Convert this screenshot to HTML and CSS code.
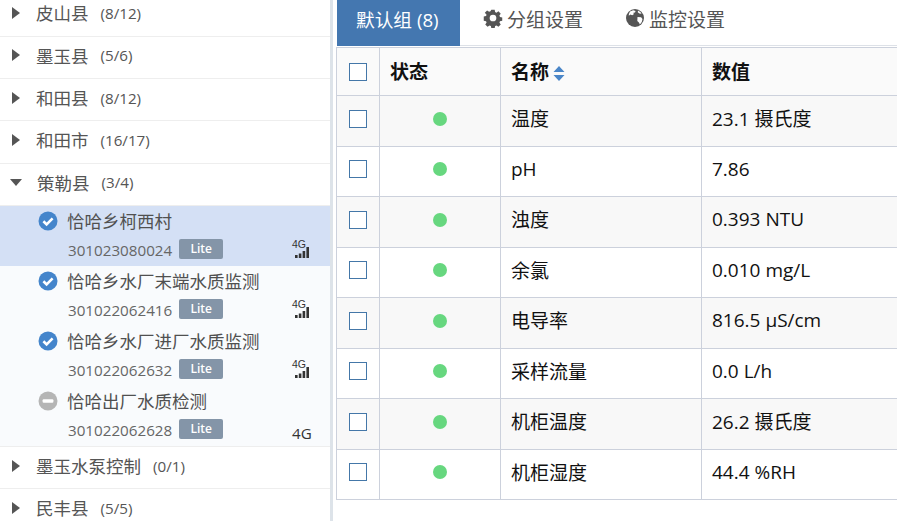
FILE: index.html
```html
<!DOCTYPE html>
<html lang="zh-CN">
<head>
<meta charset="utf-8">
<title>监控</title>
<link rel="stylesheet" href="styles.css">
</head>
<body>
<svg class="defs" width="0" height="0" aria-hidden="true">
  <symbol id="ok" viewBox="0 0 20 20"><circle cx="10" cy="10" r="9.5" fill="currentColor"/><path d="M5.4 10.3l3.2 3.1 6-6" fill="none" stroke="#fff" stroke-width="2.6"/></symbol>
  <symbol id="stop" viewBox="0 0 20 20"><circle cx="10" cy="10" r="9.5" fill="currentColor"/><rect x="4.6" y="8.2" width="10.8" height="3.6" rx="1" fill="#fff"/></symbol>
  <symbol id="sig" viewBox="0 0 14 11"><rect x="0" y="8" width="2.6" height="3"/><rect x="3.8" y="6.5" width="2.6" height="4.5"/><rect x="7.6" y="4" width="2.6" height="7"/><rect x="11.4" y="0" width="2.6" height="11"/></symbol>
</svg>
<div class="app">
  <aside class="side">
    <div class="group"><i class="tri"></i><span class="gname">皮山县</span><span class="count">(8/12)</span></div>
    <div class="group"><i class="tri"></i><span class="gname">墨玉县</span><span class="count">(5/6)</span></div>
    <div class="group"><i class="tri"></i><span class="gname">和田县</span><span class="count">(8/12)</span></div>
    <div class="group"><i class="tri"></i><span class="gname">和田市</span><span class="count">(16/17)</span></div>
    <div class="group open"><i class="tri down"></i><span class="gname">策勒县</span><span class="count">(3/4)</span></div>
    <div class="items">
      <div class="item active">
        <svg class="st ok"><use href="#ok"/></svg>
        <div class="body"><div class="iname">恰哈乡柯西村</div><div class="meta"><span class="sn">301023080024</span><span class="lite">Lite</span></div></div>
        <div class="net"><span class="g">4G</span><svg class="sig"><use href="#sig"/></svg></div>
      </div>
      <div class="item">
        <svg class="st ok"><use href="#ok"/></svg>
        <div class="body"><div class="iname">恰哈乡水厂末端水质监测</div><div class="meta"><span class="sn">301022062416</span><span class="lite">Lite</span></div></div>
        <div class="net"><span class="g">4G</span><svg class="sig"><use href="#sig"/></svg></div>
      </div>
      <div class="item">
        <svg class="st ok"><use href="#ok"/></svg>
        <div class="body"><div class="iname">恰哈乡水厂进厂水质监测</div><div class="meta"><span class="sn">301022062632</span><span class="lite">Lite</span></div></div>
        <div class="net"><span class="g">4G</span><svg class="sig"><use href="#sig"/></svg></div>
      </div>
      <div class="item">
        <svg class="st off"><use href="#stop"/></svg>
        <div class="body"><div class="iname">恰哈出厂水质检测</div><div class="meta"><span class="sn">301022062628</span><span class="lite">Lite</span></div></div>
        <div class="net"><span class="g big">4G</span></div>
      </div>
    </div>
    <div class="group"><i class="tri"></i><span class="gname">墨玉水泵控制</span><span class="count">(0/1)</span></div>
    <div class="group"><i class="tri"></i><span class="gname">民丰县</span><span class="count">(5/5)</span></div>
  </aside>
  <main class="main">
    <nav class="tabs">
      <a class="tab on">默认组 (8)</a>
      <a class="tab">
        <svg class="ti" viewBox="0 0 20 20"><path fill="#555" fill-rule="evenodd" d="M8.1 0.6h3.8l.5 2.6 1.5.7 2.3-1.5 2.6 2.7-1.5 2.2.6 1.5 2.6.5v3.8l-2.6.5-.6 1.5 1.5 2.2-2.6 2.7-2.3-1.5-1.5.6-.5 2.6H8.1l-.5-2.6-1.5-.6-2.3 1.5-2.6-2.7 1.5-2.2-.6-1.5-2.6-.5V8.3l2.6-.5.6-1.5L.7 4.1l2.6-2.7 2.3 1.5 1.5-.7zM10 6.2a3.8 3.8 0 1 0 0 7.6 3.8 3.8 0 0 0 0-7.6z" transform="translate(1.2 1.2) scale(.88)"/></svg>
        分组设置</a>
      <a class="tab">
        <svg class="ti" viewBox="0 0 20 20"><circle cx="10" cy="10" r="9" fill="#555"/><path fill="#fff" d="M5 3.4l3.2-1.2 2.4.8-.6 1.6-1.6.2.4 1.4-1.6 1-1.8-.6-1.6 1.2A8 8 0 0 1 5 3.4zM12.5 9l3.6.2 1.4 1.8a7.6 7.6 0 0 1-2.6 5.4l-1-2-1.6-1.4zM13 2.6l2.6 1.6.9 1.5-2.1-.2-1.6-1.2z"/></svg>
        监控设置</a>
    </nav>
    <table class="grid">
      <colgroup><col class="c1"><col class="c2"><col class="c3"><col class="c4"></colgroup>
      <thead>
        <tr><th class="chk"><span class="box"></span></th><th>状态</th><th>名称<svg class="sort" viewBox="0 0 12 15"><path fill="#4a86c8" d="M6 0l5.5 6H.5zM6 15L.5 9h11z"/></svg></th><th>数值</th></tr>
      </thead>
      <tbody>
        <tr><td class="chk"><span class="box"></span></td><td class="dotc"><span class="dot"></span></td><td>温度</td><td>23.1 摄氏度</td></tr>
        <tr><td class="chk"><span class="box"></span></td><td class="dotc"><span class="dot"></span></td><td>pH</td><td>7.86</td></tr>
        <tr><td class="chk"><span class="box"></span></td><td class="dotc"><span class="dot"></span></td><td>浊度</td><td>0.393 NTU</td></tr>
        <tr><td class="chk"><span class="box"></span></td><td class="dotc"><span class="dot"></span></td><td>余氯</td><td>0.010 mg/L</td></tr>
        <tr><td class="chk"><span class="box"></span></td><td class="dotc"><span class="dot"></span></td><td>电导率</td><td>816.5 μS/cm</td></tr>
        <tr><td class="chk"><span class="box"></span></td><td class="dotc"><span class="dot"></span></td><td>采样流量</td><td>0.0 L/h</td></tr>
        <tr><td class="chk"><span class="box"></span></td><td class="dotc"><span class="dot"></span></td><td>机柜温度</td><td>26.2 摄氏度</td></tr>
        <tr><td class="chk"><span class="box"></span></td><td class="dotc"><span class="dot"></span></td><td>机柜湿度</td><td>44.4 %RH</td></tr>
      </tbody>
    </table>
  </main>
</div>
</body>
</html>
```
FILE: styles.css
```css
* { box-sizing: border-box; }
html, body { margin: 0; height: 100%; overflow: hidden; }
body {
  font-family: "Open Sans", "Noto Sans CJK SC", sans-serif;
  color: #111;
  background: #fff;
}
.defs { display: block; height: 0; }
.app { display: flex; height: 521px; overflow: hidden; }

.side {
  flex: 0 0 333px;
  border-right: 3px solid #dde3e9;
  overflow: hidden;
  color: #555;
}
.side > :first-child { margin-top: -5.7px; }
.group {
  display: flex;
  align-items: center;
  height: 42.33px;
  padding: 0 0 4px 12px;
  border-bottom: 1px solid #eeeeee;
}
.tri {
  flex: 0 0 auto;
  width: 0;
  height: 0;
  border-style: solid;
  border-width: 6px 0 6px 8px;
  border-color: transparent transparent transparent #555;
}
.tri.down {
  margin-left: -2px;
  margin-top: 1px;
  border-width: 7px 6.5px 0 6.5px;
  border-color: #555 transparent transparent transparent;
}
.gname { font-size: 17.5px; margin-left: 16px; }
.tri.down + .gname { margin-left: 15px; }
.count { font-size: 15.2px; margin-left: 12px; }

.items { background: #f9fbfd; border-bottom: 1px solid #eeeeee; }
.item {
  display: flex;
  height: 60px;
  padding: 0 18px 0 38px;
  position: relative;
}
.item.active { background: #d4e0f5; }
.st { flex: 0 0 20px; width: 20px; height: 20px; margin-top: 5px; }
.st.ok { color: #4485cb; }
.st.off { color: #b5b5b5; }
.body { margin-left: 10px; flex: 1; min-width: 0; }
.iname { font-size: 17.5px; line-height: 24px; margin: 3px 0 0 -1px; color: #505050; white-space: nowrap; }
.meta { display: flex; align-items: flex-start; margin-top: 6px; }
.sn { font-size: 15.2px; line-height: 20px; padding-top: 1px; color: #666; }
.lite {
  margin-left: 7px;
  width: 44px;
  height: 20px;
  border-radius: 2px;
  background: #8495a8;
  color: #fff;
  font-size: 12px;
  font-weight: 600;
  line-height: 20px;
  text-align: center;
}
.net {
  position: absolute;
  right: 19px;
  bottom: 8px;
  width: 19px;
  display: flex;
  flex-direction: column;
  align-items: flex-start;
  color: #333;
}
.g { font-size: 10.5px; line-height: 10px; font-family: "Liberation Sans", sans-serif; }
.g.big { font-size: 15.2px; line-height: 16px; margin-bottom: -3px; font-family: "Open Sans", sans-serif; }
.sig { width: 14px; height: 11px; fill: #333; display: block; margin: -2.5px 0 0 3px; }

.main { flex: 1; min-width: 0; padding-left: 3px; }
.tabs { display: flex; height: 46px; border-bottom: 1px solid #dde1e7; margin-left: 1px; }
.tab {
  display: flex;
  align-items: center;
  height: 46px;
  font-size: 19px;
  color: #555;
  padding: 0 21px 8px;
  gap: 4px;
  white-space: nowrap;
}
.tab:nth-child(2) { padding-left: 23px; }
.tab.on { background: #4477b0; color: #fff; font-size: 18.7px; padding: 0 19px 10px; width: 123px; }
.ti { width: 20px; height: 20px; flex: 0 0 20px; margin-top: -2px; }

.grid {
  border-collapse: collapse;
  table-layout: fixed;
  width: 800px;
  font-size: 19px;
  margin-top: 1px;
}
.c1 { width: 43px; }
.c2 { width: 121px; }
.c3 { width: 201px; }
.c4 { width: 435px; }
.grid th, .grid td {
  border: 1px solid #ccd1dc;
  padding: 0 10px 5px;
  text-align: left;
  height: 50.5px;
  white-space: nowrap;
}
.grid th { height: 48px; padding-bottom: 1px; font-weight: 700; background: #fafafa; }
.grid tbody tr:nth-child(odd) { background: #f8f8f8; }
.grid .chk { padding: 0 0 2px; text-align: center; }
.grid td.chk { padding-bottom: 8px; }
.box {
  display: inline-block;
  width: 18px;
  height: 18px;
  border: 1px solid #4477a8;
  background: #fff;
  vertical-align: middle;
}
.grid .dotc { text-align: center; padding-bottom: 8px; }
.dot {
  display: inline-block;
  width: 14px;
  height: 14px;
  border-radius: 50%;
  background: #67d77f;
  vertical-align: middle;
}
.sort { width: 12px; height: 15px; margin-left: 4px; vertical-align: -2px; }
```
